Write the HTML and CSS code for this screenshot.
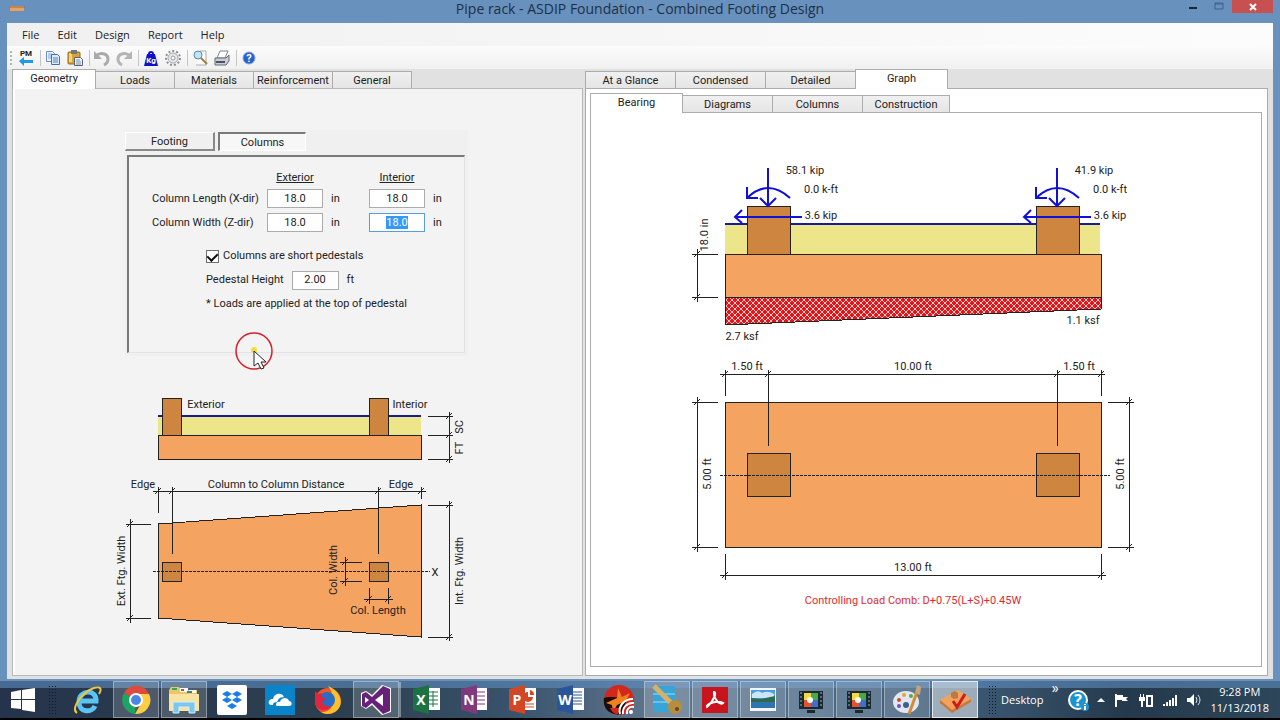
FILE: index.html
```html
<!DOCTYPE html>
<html lang="en">
<head>
  <meta charset="UTF-8">
  <title>Pipe rack - ASDIP Foundation - Combined Footing Design</title>
  <link rel="stylesheet" href="styles.css">
</head>
<body>
  <div class="window">
    <header class="titlebar">
      <svg class="app-icon" width="16" height="8" viewBox="0 0 16 8"><path fill="#e9a15f" d="M1 1h14v5H1z"/><path stroke="#9a6a45" d="M0 2h16"/></svg>
      <h1 class="title">Pipe rack - ASDIP Foundation - Combined Footing Design</h1>
      <div class="window-buttons">
        <button class="win-btn" aria-label="Minimize"><svg width="10" height="12"><path fill="#1b2733" d="M1 6h8v2H1z"/></svg></button>
        <button class="win-btn" aria-label="Maximize"><svg width="12" height="12"><path fill="none" stroke="#41618a" d="M2 2h8v6H2zM2 3h8"/></svg></button>
        <button class="win-btn close" aria-label="Close"><svg width="10" height="10"><path stroke="#fff" stroke-width="2" d="M2 2l6 6M8 2l-6 6"/></svg></button>
      </div>
    </header>

    <nav class="menubar">
      <button>File</button>
      <button>Edit</button>
      <button>Design</button>
      <button>Report</button>
      <button>Help</button>
    </nav>

    <div class="toolbar">
      <span class="grip"></span>
      <button aria-label="Project manager"><svg width="18" height="18"><text class="pm" x="9" y="7">PM</text><path fill="#1c9be6" d="M2 12l5-4v3h9v3H7v3z"/></svg></button>
      <span class="sep"></span>
      <button aria-label="Copy"><svg width="18" height="18"><path fill="#eef4fc" stroke="#6b8fc6" d="M2.500 2.500h6l2 2v8h-8z"/><path stroke="#7fa3d8" d="M4 5h4M4 7h4M4 9h4"/><path fill="#dce9fa" stroke="#446fb5" d="M7.500 5.500h6l2 2v8h-8z"/><path stroke="#5c87c8" d="M9 9h5M9 11h5M9 13h5"/></svg></button>
      <button aria-label="Paste"><svg width="18" height="18"><rect x="2" y="3" width="12" height="12" rx="1" fill="#dba437" stroke="#8f6a1c"/><path fill="#f3d27b" d="M3 4h3v9H3z"/><path fill="#777" d="M5 1h6v4H5z"/><path fill="#eef2f6" stroke="#53637a" d="M8.500 8.500h6l2 2v6h-8z"/><path stroke="#7b8ea8" d="M10 11h4M10 13h5M10 15h5"/></svg></button>
      <span class="sep"></span>
      <button aria-label="Undo"><svg width="18" height="18"><path fill="none" stroke="#aaa" stroke-width="3" d="M4 6c5-3 11-1 11 4 0 3-2 5-4 6"/><path fill="#aaa" d="M1 2v8h8z"/></svg></button>
      <button aria-label="Redo"><svg width="18" height="18"><path fill="none" stroke="#b5b5b5" stroke-width="3" d="M14 6C9 3 3 5 3 10c0 3 2 5 4 6"/><path fill="#b5b5b5" d="M17 2v8H9z"/></svg></button>
      <span class="sep"></span>
      <button aria-label="Units"><svg width="18" height="18"><path fill="none" stroke="#1111cc" stroke-width="2" d="M7 5a2 2 0 1 1 4 0"/><path fill="#1111cc" d="M5 5h8l3 12H2z"/><text class="kg" x="9" y="14">Kg</text></svg></button>
      <button aria-label="Settings"><svg width="18" height="18"><circle cx="9" cy="9" r="7" fill="none" stroke="#8b8f96" stroke-width="2" stroke-dasharray="2 2"/><circle cx="9" cy="9" r="5" fill="#e6e8eb" stroke="#a1a5ab"/><circle cx="9" cy="9" r="2" fill="#fff" stroke="#999"/></svg></button>
      <span class="sep"></span>
      <button aria-label="Preview"><svg width="18" height="18"><path fill="#fbfbfb" stroke="#aaa" d="M9 2h6v14H5"/><circle cx="7" cy="6" r="4" fill="#bfe4f8" stroke="#5b8ba8"/><path stroke="#a08240" stroke-width="2" d="M10 9l6 6"/></svg></button>
      <button aria-label="Print"><svg width="18" height="18"><path fill="#fff" stroke="#7c8490" d="M7 2h8l-3 7H4z"/><path fill="#c9ced6" stroke="#626a78" d="M2 9h11l3-3v6l-3 4H2z"/><path fill="#4b5260" d="M3 12h9v2H3z"/></svg></button>
      <span class="sep"></span>
      <button aria-label="Help"><svg width="18" height="18"><circle cx="9" cy="9" r="6" fill="#2a62c9" stroke="#7fa6e6"/><text class="q" x="9" y="13">?</text></svg></button>
    </div>

    <main class="workspace">
      <section class="pane input-pane">
        <div class="tabs" role="tablist">
          <button class="tab active w82" role="tab">Geometry</button>
          <button class="tab w79" role="tab">Loads</button>
          <button class="tab w79" role="tab">Materials</button>
          <button class="tab w79" role="tab">Reinforcement</button>
          <button class="tab w79" role="tab">General</button>
        </div>
        <div class="page geometry">
          <div class="group">
            <div class="group-tabs">
              <button class="flat-tab">Footing</button>
              <button class="flat-tab pressed">Columns</button>
            </div>
            <form class="fields">
              <div class="dims">
                <span></span><u>Exterior</u><span></span><u>Interior</u><span></span>
                <label for="len-ext">Column Length (X-dir)</label>
                <input id="len-ext" value="18.0"><span class="unit">in</span>
                <input id="len-int" value="18.0" aria-label="Interior column length"><span class="unit">in</span>
                <label for="wid-ext">Column Width (Z-dir)</label>
                <input id="wid-ext" value="18.0"><span class="unit">in</span>
                <input id="wid-int" value="18.0" aria-label="Interior column width"><span class="unit">in</span>
              </div>
              <div class="pedestal">
                <label class="check"><input type="checkbox" checked>Columns are short pedestals</label>
                <div class="height-row">
                  <label for="ped">Pedestal Height</label>
                  <input id="ped" value="2.00"><span>ft</span>
                </div>
                <p>* Loads are applied at the top of pedestal</p>
              </div>
            </form>
            <svg class="pointer" width="40" height="40" viewBox="0 0 40 40"><circle cx="19" cy="19" r="18" fill="none" stroke="#d5202c" stroke-width="1.500"/><circle cx="19" cy="18" r="3" fill="#f2e230"/><path fill="#fff" stroke="#222" d="M19 19v15l4-3 3 6 3-1-3-6h5z"/></svg>
          </div>

          <svg class="drawing" width="370" height="260" viewBox="112 390 370 260">
            <defs>
              <path id="tick" d="M-4 0H4M0-4V4M-3 3L3-3"/>
            </defs>
            <path class="soil" d="M158 417h263v18H158z"/>
            <path class="grade" d="M158 416h263"/>
            <path class="concrete" d="M158 435h263v24H158z"/>
            <path class="column" d="M162 398h19v37h-19zM369 398h19v37h-19z"/>
            <path class="line" d="M449 412v51M428 416h25M428 435h25M428 459h25"/>
            <path class="concrete" d="M158 524L421 505V637L158 618z"/>
            <path class="column" d="M162 562h19v19h-19zM369 562h19v19h-19z"/>
            <path class="line dashed" d="M153 571H430"/>
            <path class="line" d="M153 491H426M158 487v26M172 487v67M378 487v67M421 487v12"/>
            <path class="line" d="M130 519V623M126 524h25M126 618h25M449 501V641M428 505h25M428 637h25"/>
            <path class="line" d="M345 557v29M340 562h22M340 581h22M364 599h29M369 588v16M388 588v16"/>
            <g class="line">
              <use href="#tick" x="449" y="416"/><use href="#tick" x="449" y="435"/><use href="#tick" x="449" y="459"/>
              <use href="#tick" x="158" y="491"/><use href="#tick" x="172" y="491"/><use href="#tick" x="378" y="491"/><use href="#tick" x="421" y="491"/>
              <use href="#tick" x="130" y="524"/><use href="#tick" x="130" y="618"/><use href="#tick" x="449" y="505"/><use href="#tick" x="449" y="637"/>
              <use href="#tick" x="345" y="562"/><use href="#tick" x="345" y="581"/><use href="#tick" x="369" y="599"/><use href="#tick" x="388" y="599"/>
            </g>
            <text x="206" y="408">Exterior</text>
            <text x="410" y="408">Interior</text>
            <text x="143" y="488">Edge</text>
            <text x="276" y="488">Column to Column Distance</text>
            <text x="401" y="488">Edge</text>
            <text x="435" y="576">X</text>
            <text x="378" y="614">Col. Length</text>
            <text transform="translate(463 427) rotate(-90)">SC</text>
            <text transform="translate(463 448) rotate(-90)">FT</text>
            <text transform="translate(125 571) rotate(-90)">Ext. Ftg. Width</text>
            <text transform="translate(463 571) rotate(-90)">Int. Ftg. Width</text>
            <text transform="translate(337 570) rotate(-90)">Col. Width</text>
          </svg>
        </div>
      </section>

      <section class="pane result-pane">
        <div class="tabs" role="tablist">
          <button class="tab w90" role="tab">At a Glance</button>
          <button class="tab w90" role="tab">Condensed</button>
          <button class="tab w90" role="tab">Detailed</button>
          <button class="tab active w92" role="tab">Graph</button>
        </div>
        <div class="page graph">
          <div class="tabs" role="tablist">
            <button class="tab active w92" role="tab">Bearing</button>
            <button class="tab w90" role="tab">Diagrams</button>
            <button class="tab w90" role="tab">Columns</button>
            <button class="tab w88" role="tab">Construction</button>
          </div>
          <div class="page canvas">
            <svg class="drawing" width="472" height="450" viewBox="690 160 472 450">
              <defs>
                <pattern id="hatch" width="6" height="6" patternUnits="userSpaceOnUse">
                  <rect width="6" height="6" fill="#e2141c"/>
                  <path stroke="#ffc9c4" d="M0 0l6 6M6 0L0 6"/>
                </pattern>
                <g id="loads">
                  <path d="M768 168v38M760 198l8 8 8-8"/>
                  <path d="M747 198q21-20 43 0M747 187v11h11"/>
                  <path d="M802 217H735M742 210l-7 7 7 6"/>
                </g>
              </defs>
              <path class="soil" d="M725 225h375v29H725z"/>
              <path class="grade" d="M725 224h375"/>
              <path class="column" d="M747 206h43v48h-43zM1036 206h43v48h-43z"/>
              <path class="concrete" d="M725 254h376v43H725z"/>
              <path class="bearing" d="M725 297h376v12L725 325z"/>
              <use class="load" href="#loads"/>
              <use class="load" href="#loads" x="289"/>
              <path class="concrete" d="M725 402h376v145H725z"/>
              <path class="column" d="M747 453h43v43h-43zM1036 453h43v43h-43z"/>
              <path class="line dashed" d="M720 475h390"/>
              <path class="line" d="M697 249v53M692 254h26M692 297h26"/>
              <path class="line" d="M720 374h385M725 370v26M768 370v76M1057 370v76M1101 370v26"/>
              <path class="line" d="M697 397v155M692 402h26M692 547h26M1129 397v155M1108 402h26M1108 547h26"/>
              <path class="line" d="M720 575h386M725 554v26M1101 554v26"/>
              <g class="line">
                <use href="#tick" x="697" y="254"/><use href="#tick" x="697" y="297"/>
                <use href="#tick" x="725" y="374"/><use href="#tick" x="768" y="374"/><use href="#tick" x="1057" y="374"/><use href="#tick" x="1101" y="374"/>
                <use href="#tick" x="697" y="402"/><use href="#tick" x="697" y="547"/><use href="#tick" x="1129" y="402"/><use href="#tick" x="1129" y="547"/>
                <use href="#tick" x="725" y="575"/><use href="#tick" x="1101" y="575"/>
              </g>
              <text x="805" y="174">58.1 kip</text>
              <text x="821" y="193">0.0 k-ft</text>
              <text x="821" y="219">3.6 kip</text>
              <text x="1094" y="174">41.9 kip</text>
              <text x="1110" y="193">0.0 k-ft</text>
              <text x="1110" y="219">3.6 kip</text>
              <text x="742" y="340">2.7 ksf</text>
              <text x="1083" y="324">1.1 ksf</text>
              <text x="747" y="370">1.50 ft</text>
              <text x="913" y="370">10.00 ft</text>
              <text x="1079" y="370">1.50 ft</text>
              <text x="913" y="571">13.00 ft</text>
              <text transform="translate(708 235) rotate(-90)">18.0 in</text>
              <text transform="translate(711 474) rotate(-90)">5.00 ft</text>
              <text transform="translate(1124 474) rotate(-90)">5.00 ft</text>
              <text class="combo" x="913" y="604">Controlling Load Comb: D+0.75(L+S)+0.45W</text>
            </svg>
          </div>
        </div>
      </section>
    </main>
  </div>

  <footer class="taskbar">
    <button class="start" aria-label="Start"><svg width="28" height="28"><path fill="#fff" d="M2 6l10-2v9H2zM13 4l13-2v11H13zM2 14h10v9L2 22zM13 14h13v12l-13-2z"/></svg></button>
    <span class="dots"></span>
    <div class="apps">
      <button aria-label="Internet Explorer"><svg width="32" height="32"><path fill="none" stroke="#5cc4f2" stroke-width="5" d="M8 17h16c1-12-17-12-17 1 0 11 13 11 16 4"/><path fill="none" stroke="#f2c53a" stroke-width="2" d="M5 29C-2 25 10 8 22 4c7-2 8 1 5 6"/></svg></button>
      <button class="open" aria-label="Chrome"><svg width="32" height="32"><path fill="#dd4b3e" d="M16 16L4 9a14 14 0 0 1 25 1H16z"/><path fill="#1ea362" d="M16 16l-1 14A14 14 0 0 1 4 9z"/><path fill="#ffcd42" d="M16 10h13a14 14 0 0 1-14 20l7-12z"/><circle cx="16" cy="16" r="7" fill="#fff"/><circle cx="16" cy="16" r="5" fill="#4a86e8"/></svg></button>
      <button class="open" aria-label="File Explorer"><svg width="34" height="32"><path fill="#e8c866" d="M2 6l2-3h8l2 3h16v21H2z"/><path fill="#fff" d="M13 4h8v4h-8zM22 6h7v3h-7z"/><path fill="#3aa35c" d="M5 4h5v2H5z"/><path fill="#cf4b3c" d="M14 5h3v2h-3z"/><path fill="#3b78c6" d="M20 7h5v2h-5z"/><path fill="#f8e4a0" d="M2 10h30v17H2z"/><path fill="#7cc8ec" stroke="#d4eefa" d="M6 18h22v11h-6v-6H12v6H6z"/></svg></button>
      <button aria-label="Dropbox"><svg width="32" height="32"><rect x="1" y="1" width="30" height="30" rx="2" fill="#fff"/><path fill="#1a7fe5" d="M11 7l5 3-5 3-5-3zM21 7l5 3-5 3-5-3zM11 13l5 3-5 3-5-3zM21 13l5 3-5 3-5-3zM16 19l5 3-5 3-5-3z"/></svg></button>
      <button aria-label="OneDrive"><svg width="32" height="32"><path fill="#0a84c8" d="M1 1h30v30H1z"/><path fill="#fff" d="M5 20c-1-3 1-5 4-5 1-6 9-7 11-2-5 0-6 3-7 5-3 0-4 1-4 3-2 0-3 0-4-1zM12 21c0-3 2-4 4-3 1-5 8-5 9-1 3 0 4 5 0 5H14c-1 0-2 0-2-1z"/></svg></button>
      <button aria-label="Firefox"><svg width="32" height="32"><circle cx="16" cy="17" r="13" fill="#f2552c"/><path fill="#fbc12d" d="M16 2c10 4 15 13 12 20-3 8-14 10-19 6 12 1 17-12 7-26z"/><circle cx="15" cy="16" r="8" fill="#2b6cc4"/><path fill="#e0263c" d="M3 7l3 3 3-1 1 4 4 2-4 3c1 4 6 5 9 4-4 7-14 5-16-3z"/></svg></button>
      <button class="open stacked" aria-label="Visual Studio"><svg width="32" height="32"><path fill="#fff" fill-rule="evenodd" d="M1 9l5-2 6 4L22 1l9 3v24l-9 3-10-10-6 4-5-3z"/><path fill="#68217a" fill-rule="evenodd" d="M2 10l4-2 6 5L23 2l7 3v22l-7 3-11-11-6 5-4-2zM5 13v6l4-3zM15 16l8 6V10z"/></svg></button>
      <button aria-label="Excel"><svg width="32" height="32"><path fill="#fff" d="M15 4h14v22H15z"/><path stroke="#217346" d="M18 8h9M18 12h9M18 16h9M18 20h9M22 7v16"/><path fill="#1e7142" d="M2 5l16-4v29L2 26z"/><text class="tile" x="10" y="21">X</text></svg></button>
      <button aria-label="OneNote"><svg width="32" height="32"><path fill="#fff" d="M15 4h13v22H15z"/><path stroke="#80397b" d="M18 8h8M18 12h8M18 16h8M18 20h8M29 5v6M29 13v6"/><path fill="#80397b" d="M2 5l16-4v29L2 26z"/><text class="tile" x="10" y="21">N</text></svg></button>
      <button aria-label="PowerPoint"><svg width="32" height="32"><path fill="#fff" d="M15 4h14v22H15z"/><path fill="#d24726" d="M21 8v5h5a5 5 0 1 1-5-5z"/><path fill="#d24726" d="M23 6a5 5 0 0 1 4 5h-4z"/><path stroke="#d24726" d="M18 20h9M18 23h9"/><path fill="#d24726" d="M2 5l16-4v29L2 26z"/><text class="tile" x="10" y="21">P</text></svg></button>
      <button aria-label="Word"><svg width="32" height="32"><path fill="#fff" d="M15 4h14v22H15z"/><path stroke="#2a5699" d="M18 8h9M18 11h9M18 14h9M18 17h9M18 20h9"/><path fill="#2a5699" d="M2 5l16-4v29L2 26z"/><text class="tile" x="10" y="21">W</text></svg></button>
      <button aria-label="Burner"><svg width="32" height="32"><circle cx="16" cy="16" r="15" fill="#d3261c"/><path fill="#1c0c08" d="M1 14c6-2 9 0 14-1l8 5-4 12c-9 2-20-3-18-16z"/><path fill="#f08020" d="M3 19l11-5 1-10 4 9 8-4-4 8-9 4-4 7-1-7z"/><path fill="#d3261c" d="M7 24h10l-2 6c-4 0-6-2-8-6z"/><path fill="none" stroke="#fff" stroke-width="2" d="M17 30c-2-8 4-15 13-15M20 30c-1-6 4-12 11-11M24 30c-1-4 2-8 7-7"/><circle cx="28" cy="28" r="2" fill="#fff"/></svg></button>
      <button class="open" aria-label="Database key"><svg width="34" height="32"><path fill="#38a5d8" d="M3 2h22v26H3z"/><path stroke="#a5dcf2" d="M3 10h22M3 18h22"/><path stroke="#d9b066" stroke-width="5" d="M4 2l18 18"/><circle cx="25" cy="23" r="7" fill="#b98c3e"/><circle cx="27" cy="25" r="2" fill="#5a4a2a"/></svg></button>
      <button class="open" aria-label="Acrobat Reader"><svg width="32" height="32"><path fill="#c8141c" d="M3 3h26v26H3z"/><path fill="none" stroke="#fff" stroke-width="2" d="M15 8c3 0 0 9-7 15-2-3 10-7 16-4-3 3-10-5-9-11z"/></svg></button>
      <button class="open" aria-label="Photos"><svg width="32" height="32"><path fill="#f2f6fa" d="M3 4h26v23H3z"/><path fill="#4b9ce0" d="M4 6h24v9H4z"/><path fill="#cbe6f8" d="M5 10q6-5 10-1 6-3 12 1v4H5z"/><path fill="#2f6a52" d="M4 14l10 1 14-3v6H4z"/><path fill="#2f74ad" d="M4 18h24v6H4z"/></svg></button>
      <button class="open" aria-label="Recorder"><svg width="32" height="32"><path fill="#1b2a30" d="M4 7h24v18H4zM12 26h8v3h-8z"/><path fill="#f3d64a" d="M9 9h7v7H9z"/><path fill="#e4512e" d="M9 16h7v7H9z"/><path fill="#49a84c" d="M16 9h7v7h-7z"/><path fill="#3e6fcb" d="M16 16h7v7h-7z"/><circle cx="15" cy="16" r="3" fill="#fff"/><path stroke="#8fb1bd" stroke-dasharray="2 2" d="M6 8v16M26 8v16"/></svg></button>
      <button class="open" aria-label="Recorder"><svg width="32" height="32"><path fill="#1b2a30" d="M4 7h24v18H4zM12 26h8v3h-8z"/><path fill="#f3d64a" d="M9 9h7v7H9z"/><path fill="#e4512e" d="M9 16h7v7H9z"/><path fill="#49a84c" d="M16 9h7v7h-7z"/><path fill="#3e6fcb" d="M16 16h7v7h-7z"/><circle cx="15" cy="16" r="3" fill="#fff"/><path stroke="#8fb1bd" stroke-dasharray="2 2" d="M6 8v16M26 8v16"/></svg></button>
      <button class="open" aria-label="Paint"><svg width="32" height="32"><ellipse cx="15" cy="18" rx="13" ry="11" fill="#dfe8f2"/><circle cx="8" cy="16" r="2" fill="#d8432f"/><circle cx="13" cy="11" r="2" fill="#e8a72c"/><circle cx="20" cy="12" r="2" fill="#58a84a"/><circle cx="8" cy="22" r="2" fill="#7b4fb5"/><circle cx="15" cy="21" r="3" fill="#3d5f8c"/><path stroke="#d78a35" stroke-width="3" d="M26 8l-8 22"/><path fill="#c9a37a" d="M24 9l2-8 4 2-1 8z"/></svg></button>
      <button class="open current" aria-label="ASDIP Foundation"><svg width="34" height="32"><path fill="#f3a25c" d="M2 16L20 6l13 9-19 11z"/><path fill="#c9783a" d="M2 16l12 10v3L2 19zM14 26l19-11v3L14 29z"/><path fill="#b97a45" d="M13 9l4-2 3 2v5l-4 1-3-2z"/><path fill="none" stroke="#d01c1c" stroke-width="3" d="M15 17l4 6 8-13"/></svg></button>
    </div>
    <span class="dots tray-dots"></span>
    <div class="tray">
      <button class="desktop">Desktop</button>
      <span class="chevrons">»</span>
      <button aria-label="Support"><svg width="22" height="22"><circle cx="11" cy="11" r="9" fill="#1c93cf" stroke="#fff" stroke-width="2"/><text class="q big" x="11" y="17">?</text><circle cx="18" cy="18" r="4" fill="#1c93cf"/><path fill="#fff" d="M17 15h2v1h-2zM17 17h2v4h-2z"/></svg></button>
      <button aria-label="Show hidden icons"><svg width="8" height="6"><path fill="#fff" d="M0 5l4-4 4 4z"/></svg></button>
      <button aria-label="Action Center"><svg width="16" height="16"><path fill="#fff" d="M2 2h2v13H2zM4 3h6v2h5l-2 2 2 2H9V8H4z"/></svg></button>
      <button aria-label="Battery"><svg width="16" height="16"><path fill="#fff" d="M2 2h1v3h2V2h1v3h1v4H5v6H3V9H1V5h1z"/><path fill="none" stroke="#fff" stroke-width="2" d="M9 4h5v10H9z"/></svg></button>
      <button aria-label="Network"><svg width="16" height="16"><path fill="#fff" d="M1 12h2v2H1zM4 10h2v4H4zM7 8h2v6H7zM10 6h2v8h-2zM13 3h2v11h-2z"/></svg></button>
      <button aria-label="Volume"><svg width="16" height="16"><path fill="#fff" d="M1 6h3l4-4v12l-4-4H1z"/><path fill="none" stroke="#dde4ea" d="M10 5q2 3 0 6M12 3q4 5 0 10"/></svg></button>
      <div class="clock"><span>9:28 PM</span><span>11/13/2018</span></div>
    </div>
  </footer>

  <script>
    const field = document.getElementById("wid-int");
    field.focus();
    field.select();
  </script>
</body>
</html>
```
FILE: styles.css
```css
* {
  box-sizing: border-box;
}

body {
  margin: 0;
  height: 100vh;
  display: flex;
  flex-direction: column;
  background-color: #6891bd;
  font-family: Roboto, "Liberation Sans", sans-serif;
  font-size: 11px;
  color: #222;
}

button {
  font: inherit;
  color: inherit;
  border: none;
  background: none;
  padding: 0;
}

svg {
  display: block;
  flex: none;
}

.window {
  flex: 1;
  min-height: 0;
  display: flex;
  flex-direction: column;
  padding: 0 7px 2px;
}

/* title bar */
.titlebar {
  display: grid;
  grid-template-columns: 1fr auto 1fr;
  height: 23px;
}

.app-icon {
  margin: 5px 0 0 2px;
}

.title {
  margin: 0;
  font-family: "Open Sans", sans-serif;
  font-size: 14px;
  font-weight: normal;
  line-height: 18px;
  color: #1d3047;
}

.window-buttons {
  display: flex;
  justify-content: flex-end;
  height: 13px;
}

.win-btn {
  width: 26px;
  display: flex;
  justify-content: center;
  align-items: center;
}

.win-btn.close {
  width: 41px;
  background-color: #c75050;
}

/* menu and toolbar */
.menubar {
  display: flex;
  gap: 18px;
  height: 23px;
  padding-left: 15px;
  background: linear-gradient(90deg, #f0f0f0, #fcfcfc);
  font-family: "Open Sans", sans-serif;
}

.toolbar {
  display: flex;
  align-items: center;
  height: 23px;
  background: linear-gradient(#fcfcfc, #f0f0f0);
}

.toolbar button {
  width: 22px;
  display: flex;
  justify-content: center;
}

.grip {
  width: 2px;
  height: 14px;
  margin: 0 3px;
  background: repeating-linear-gradient(#b5b5b5 0 2px, transparent 2px 4px);
}

.sep {
  width: 1px;
  height: 16px;
  margin: 0 1px 0 3px;
  background-color: #c5c5c5;
}

.pm, .kg, .q, .tile {
  font-weight: bold;
  text-anchor: middle;
}

.pm {
  font-size: 8px;
  fill: #222;
}

.kg {
  font-size: 8px;
  fill: #fff;
}

.q {
  font-size: 11px;
  fill: #fff;
}

.q.big {
  font-size: 16px;
}

.tile {
  font-family: "Open Sans", sans-serif;
  font-size: 14px;
  fill: #fff;
}

/* workspace */
.workspace {
  flex: 1;
  min-height: 0;
  display: grid;
  grid-template-columns: 577fr 689fr;
  background-color: #e1e1e1;
}

.pane {
  display: flex;
  flex-direction: column;
  min-width: 0;
  padding: 0 5px 3px;
}

.input-pane {
  padding-right: 1px;
}

.result-pane {
  padding-left: 1px;
}

.tabs {
  display: flex;
  align-items: flex-end;
  height: 19px;
}

.tab {
  height: 17px;
  margin-left: -1px;
  border: 1px solid #acacac;
  border-bottom: none;
  background: linear-gradient(#f0f0f0, #e5e5e5);
}

.tab:first-child {
  margin-left: 0;
}

.tab.active {
  height: 20px;
  margin-bottom: -1px;
  padding-bottom: 2px;
  background: #fff;
  z-index: 1;
}

.w79 { width: 80px; }
.w82 { width: 84px; }
.w88 { width: 88px; }
.w90 { width: 91px; }
.w92 { width: 93px; }

.page {
  flex: 1;
  min-height: 0;
  display: flex;
  flex-direction: column;
  align-items: center;
  border: 1px solid #acacac;
}

.geometry {
  border-left: 3px solid #fff;
  outline: 1px solid #b8b8b8;
  outline-offset: -1px;
  background-color: #f3f3f3;
  padding: 41px 4px 0 0;
}

.graph {
  align-items: stretch;
  padding: 4px 5px 8px 4px;
  background-color: #fff;
}

.canvas {
  background-color: #fff;
  padding-top: 47px;
}

/* column fields */
.group {
  position: relative;
  width: 343px;
  padding: 2px 3px 3px 0;
  background-color: #f0f0f0;
}

.group-tabs {
  display: flex;
  gap: 3px;
  margin-bottom: 4px;
}

.flat-tab {
  width: 90px;
  height: 19px;
  border: solid;
  border-width: 1px 2px 2px 1px;
  border-color: #fff #8a8a8a #8a8a8a #fff;
}

.flat-tab.pressed {
  width: 88px;
  border-width: 2px 1px 1px 2px;
  border-color: #7a7a7a #fff #fff #7a7a7a;
  background-color: #f7f7f7;
}

.fields {
  height: 198px;
  margin-left: 2px;
  padding: 11px 0 0 23px;
  border: solid;
  border-width: 2px 1px 1px 2px;
  border-color: #7a7a7a #e3e3e3 #e3e3e3 #7a7a7a;
  background-color: #f3f3f3;
}

.dims {
  display: grid;
  grid-template-columns: 115px 56px 46px 56px 40px;
  grid-template-rows: 18px 24px 24px;
  align-items: center;
}

.dims u {
  text-align: center;
}

.unit {
  padding-left: 8px;
}

.fields input:not([type]) {
  width: 100%;
  height: 19px;
  padding: 0;
  border: 1px solid #ababab;
  background-color: #fff;
  font: inherit;
  color: inherit;
  text-align: center;
}

.fields input:not([type]):focus {
  border-color: #569de5;
  outline: none;
}

.fields input::selection {
  background-color: #3399ff;
  color: #fff;
}

.pedestal {
  padding: 10px 0 0 54px;
  line-height: 24px;
}

.check {
  display: flex;
  align-items: center;
  gap: 4px;
}

.check input {
  appearance: none;
  width: 13px;
  height: 13px;
  margin: 0;
  border: 1px solid #707070;
  background-color: #fff;
}

.check input:checked {
  display: grid;
  place-items: center;
}

.check input:checked::before {
  content: "";
  width: 5px;
  height: 8px;
  margin-bottom: 2px;
  border: solid #111;
  border-width: 0 2px 2px 0;
  transform: rotate(45deg);
}

.height-row {
  display: flex;
  align-items: center;
  gap: 8px;
}

.fields .height-row input {
  width: 47px;
}

.pedestal p {
  margin: 0;
}

.pointer {
  position: absolute;
  left: 110px;
  top: 202px;
}

/* drawings */
.geometry .drawing {
  margin-top: 34px;
}

.drawing text {
  font-size: 11px;
  fill: #222;
  text-anchor: middle;
}

.drawing .combo {
  fill: #e02a30;
}

.soil {
  fill: #ede58a;
}

.grade {
  stroke: #1a1a9c;
  stroke-width: 2;
}

.concrete, .column, .bearing, .line {
  stroke: #222;
  shape-rendering: crispEdges;
}

.concrete {
  fill: #f4a460;
}

.column {
  fill: #cd853f;
}

.bearing {
  fill: url(#hatch);
}

.line {
  fill: none;
}

.dashed {
  stroke-dasharray: 3 1;
}

.load {
  fill: none;
  stroke: #1010d8;
  stroke-width: 2;
}

/* taskbar */
.taskbar {
  display: flex;
  height: 39px;
  border-bottom: 2px solid #000;
  background:
    linear-gradient(rgba(95, 140, 190, 0.6) 0 7px, transparent 7px),
    linear-gradient(90deg, #25344c, #2d4050 28%, #38536c 40%, #61788f 52%, #4c6b88 64%, #38546d 78%, #24394b 88%, #2d465a);
  color: #fff;
}

.taskbar button {
  display: flex;
  justify-content: center;
  align-items: center;
}

.start {
  width: 46px;
}

.dots {
  width: 8px;
  margin: 4px 9px 4px 2px;
  background: radial-gradient(#111b28 1px, transparent 1px) 0 0 / 3px 3px;
}

.apps {
  display: flex;
  gap: 2px;
}

.apps button {
  width: 46px;
}

.apps .open {
  border: 1px solid rgba(255, 255, 255, 0.35);
  background-color: rgba(255, 255, 255, 0.17);
}

.apps .stacked {
  margin-right: 3px;
  box-shadow: 3px 0 0 -1px rgba(255, 255, 255, 0.35);
}

.apps .current {
  border-color: rgba(255, 255, 255, 0.7);
  background-color: rgba(255, 255, 255, 0.5);
}

.tray-dots {
  margin: 4px 5px 4px 10px;
}

.tray {
  flex: 1;
  display: flex;
  align-items: center;
  justify-content: space-between;
  padding-right: 11px;
  font-family: "Open Sans", sans-serif;
  font-size: 11px;
}

.chevrons {
  align-self: flex-start;
  font-size: 14px;
  line-height: 14px;
}

.clock {
  display: flex;
  flex-direction: column;
  align-items: center;
  line-height: 16px;
}
```
